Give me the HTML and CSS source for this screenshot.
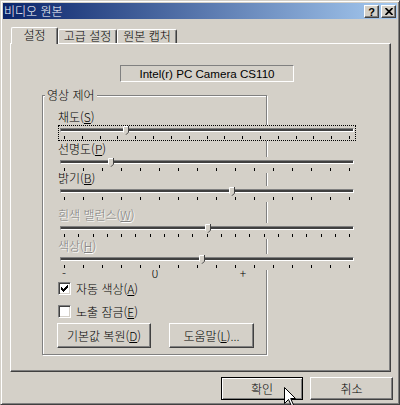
FILE: index.html
```html
<!DOCTYPE html>
<html lang="ko">
<head>
    <meta charset="UTF-8">
    <meta name="viewport" content="width=device-width, initial-scale=1.0">
    <title>비디오 원본</title>
    <link rel="stylesheet" href="styles.css">
</head>
<body>
<div class="window">
    <div class="titlebar">
        <span class="title">비디오 원본</span>
        <span class="caption-btn">?</span>
        <span class="caption-btn">
            <svg width="8" height="7" viewBox="0 0 8 7"><path d="M0.5 0 L7.5 7 M7.5 0 L0.5 7" stroke="#000" stroke-width="1.7"/></svg>
        </span>
    </div>

    <div class="dialog">
        <div class="tabs">
            <div class="tab active tab-1">설정</div>
            <div class="tab tab-2">고급 설정</div>
            <div class="tab tab-3">원본 캡처</div>
        </div>

        <div class="panel">
            <div class="device-name">Intel(r) PC Camera CS110</div>

            <div class="group">
                <div class="legend">영상 제어</div>

                <div class="control saturation">
                    <div class="label">채도(<u>S</u>)</div>
                    <div class="slider focused">
                        <div class="track"></div>
                        <div class="ticks" data-count="17"></div>
                        <span class="thumb" style="left: 64px"></span>
                    </div>
                </div>

                <div class="control">
                    <div class="label">선명도(<u>P</u>)</div>
                    <div class="slider">
                        <div class="track"></div>
                        <div class="ticks" data-count="16"></div>
                        <span class="thumb" style="left: 49px"></span>
                    </div>
                </div>

                <div class="control brightness">
                    <div class="label">밝기(<u>B</u>)</div>
                    <div class="slider">
                        <div class="track"></div>
                        <div class="ticks" data-count="16"></div>
                        <span class="thumb" style="left: 170px"></span>
                    </div>
                </div>

                <div class="control white-balance">
                    <div class="label disabled">흰색 밸런스(<u>W</u>)</div>
                    <div class="slider">
                        <div class="track"></div>
                        <div class="ticks" data-count="21"></div>
                        <span class="thumb" style="left: 146px"></span>
                    </div>
                </div>

                <div class="control hue">
                    <div class="label disabled">색상(<u>H</u>)</div>
                    <div class="slider">
                        <div class="track"></div>
                        <div class="ticks" data-count="16"></div>
                        <span class="thumb" style="left: 140px"></span>
                    </div>
                </div>

                <div class="scale">
                    <span>-</span>
                    <span class="zero">0</span>
                    <span class="plus">+</span>
                </div>

                <label class="check first">
                    <span class="box">
                        <svg width="7" height="7" viewBox="0 0 7 7" shape-rendering="crispEdges">
                            <rect x="0" y="2" width="1" height="3"/>
                            <rect x="1" y="3" width="1" height="3"/>
                            <rect x="2" y="4" width="1" height="3"/>
                            <rect x="3" y="3" width="1" height="3"/>
                            <rect x="4" y="2" width="1" height="3"/>
                            <rect x="5" y="1" width="1" height="3"/>
                            <rect x="6" y="0" width="1" height="3"/>
                        </svg>
                    </span>
                    자동 색상(<u>A</u>)
                </label>

                <label class="check">
                    <span class="box"></span>
                    노출 잠금(<u>E</u>)
                </label>

                <div class="group-buttons">
                    <button class="btn btn-reset">기본값 복원(<u>D</u>)</button>
                    <button class="btn btn-help">도움말(<u>L</u>)...</button>
                </div>
            </div>
        </div>

        <div class="footer">
            <button class="btn btn-ok default">확인</button>
            <button class="btn btn-cancel">취소</button>
        </div>
    </div>

    <!-- mouse pointer over the OK button -->
    <svg class="cursor" width="13" height="20" viewBox="0 0 13 20">
        <path d="M0.5 0.5 L0.5 16.5 L4.5 12.5 L7.5 19 L9.5 18 L6.7 11.5 L11.5 11.5 Z" fill="#fff" stroke="#000" stroke-width="1"/>
    </svg>
</div>

<script>
    // build the tick marks under each slider
    document.querySelectorAll(".ticks").forEach(function(row) {
        let count = parseInt(row.dataset.count);
        for (let i = 0; i < count; i++) {
            row.appendChild(document.createElement("span"));
        }
    });
</script>
</body>
</html>
```

FILE: styles.css
```css
* {
    box-sizing: border-box;
}
html, body {
    margin: 0;
    padding: 0;
    overflow: hidden;
}
body {
    font-family: "Noto Sans CJK KR", "Noto Sans", sans-serif;
    font-size: 12px;
    font-weight: 300;
    color: #000;
    background-color: #d4d0c8;
}
u {
    text-underline-offset: 1px;
}
/* Window frame */
.window {
    position: relative;
    width: 400px;
    height: 405px;
    padding: 2px;
    background-color: #d4d0c8;
    border: 1px solid;
    border-color: #d4d0c8 #404040 #404040 #d4d0c8;
    box-shadow: inset 1px 1px #fff, inset -1px -1px #808080;
}
.titlebar {
    display: flex;
    align-items: flex-start;
    height: 16px;
    padding-right: 1px;
    background: linear-gradient(to right, #0a246a, #a6caf0);
    color: #fff;
}
.title {
    flex: 1;
    padding-left: 1px;
    line-height: 16px;
}
.caption-btn {
    display: flex;
    align-items: center;
    justify-content: center;
    width: 15px;
    height: 13px;
    margin: 2px 0 0 2px;
    background-color: #d4d0c8;
    border: 1px solid;
    border-color: #fff #404040 #404040 #fff;
    box-shadow: inset -1px -1px #808080;
    color: #000;
    font: bold 11px "Liberation Sans", sans-serif;
}
/* Tabs */
.dialog {
    padding: 8px 6px 0 7px;
}
.tabs {
    display: flex;
    align-items: flex-end;
    height: 16px;
    padding-left: 1px;
}
.tab {
    height: 14px;
    line-height: 12px;
    text-align: center;
    background-color: #d4d0c8;
    border-top: 1px solid #fff;
    border-left: 1px solid #fff;
    border-right: 1px solid #404040;
    border-radius: 2px 2px 0 0;
    box-shadow: inset -1px 0 #808080;
}
.tab.active {
    position: relative;
    z-index: 1;
    height: 17px;
    line-height: 13px;
    margin-bottom: -1px;
}
.tab-1 { width: 47px; }
.tab-2 { width: 59px; }
.tab-3 { width: 60px; }
.panel {
    height: 329px;
    border: 1px solid;
    border-color: #fff #404040 #404040 #fff;
    box-shadow: inset -1px -1px #808080;
}
.device-name {
    width: 174px;
    height: 17px;
    margin: 21px 0 0 109px;
    border: 1px solid;
    border-color: #808080 #fff #fff #808080;
    font: 11.6px "Liberation Sans", sans-serif;
    line-height: 15px;
    text-align: center;
}
/* Group box */
.group {
    width: 225px;
    margin: 13px 0 0 31px;
    padding: 0 0 6px 15px;
    border: 1px solid #808080;
    box-shadow: inset 1px 1px #fff, 1px 1px #fff;
}
.legend {
    display: table;
    margin: -8px 0 0 -13px;
    padding: 0 2px;
    line-height: 14px;
    background-color: #d4d0c8;
}
.control.saturation {
    margin-top: 7px;
}
.control.brightness {
    margin-top: -3px;
}
.control.white-balance {
    margin-top: 5px;
}
.control.hue {
    margin-top: -1px;
}
.label {
    height: 16px;
    line-height: 16px;
    white-space: nowrap;
}
.label.disabled {
    color: #808080;
    text-shadow: 1px 1px 0 #fff;
}
/* Trackbars */
.slider {
    position: relative;
    width: 298px;
    height: 16px;
    background-color: #d4d0c8;
    border: 1px solid transparent;
}
.slider.focused {
    border: 1px dotted #000;
}
.track {
    width: 294px;
    height: 4px;
    margin: 2px 0 0 1px;
    background-color: #404040;
    border: 1px solid;
    border-color: #808080 #fff #fff #808080;
}
.ticks {
    display: flex;
    justify-content: space-between;
    width: 286px;
    height: 3px;
    margin: 4px 0 0 5px;
}
.ticks span {
    width: 1px;
    height: 3px;
    background-color: #000;
}
.thumb {
    position: absolute;
    top: 0;
    width: 6px;
    height: 9px;
    background: url("data:image/svg+xml,%3Csvg xmlns='http://www.w3.org/2000/svg' width='6' height='9'%3E%3Cpath d='M0 0H6V6L3 9L0 6Z' fill='%23d4d0c8'/%3E%3Cpath d='M0.5 6.5V0.5H5' fill='none' stroke='%23fff'/%3E%3Cpath d='M5.5 0V6.2L3 8.7' fill='none' stroke='%23404040'/%3E%3C/svg%3E");
}
.scale {
    display: flex;
    height: 10px;
    margin-top: -2px;
    line-height: 10px;
}
.scale span {
    width: 12px;
    text-align: center;
}
.scale .zero {
    margin-left: 79px;
}
.scale .plus {
    margin-left: 76px;
}
/* Check boxes */
.check {
    display: flex;
    align-items: center;
    height: 13px;
    margin-top: 10px;
    white-space: nowrap;
}
.check.first {
    margin-top: 4px;
}
.box {
    display: flex;
    align-items: center;
    justify-content: center;
    width: 13px;
    height: 13px;
    margin-right: 5px;
    background-color: #fff;
    border: 1px solid;
    border-color: #808080 #fff #fff #808080;
    box-shadow: inset 1px 1px #404040, inset -1px -1px #d4d0c8;
}
/* Buttons */
.group-buttons {
    display: flex;
    gap: 18px;
    margin-top: 5px;
    margin-left: -1px;
}
.btn {
    height: 25px;
    padding: 0;
    font-family: "Noto Sans CJK KR", "Noto Sans", sans-serif;
    font-size: 12px;
    font-weight: 300;
    color: #000;
    background-color: #d4d0c8;
    border: 1px solid;
    border-color: #fff #404040 #404040 #fff;
    box-shadow: inset -1px -1px #808080;
    white-space: nowrap;
}
.btn-reset { width: 94px; }
.btn-help { width: 85px; }
.footer {
    display: flex;
    justify-content: flex-end;
    gap: 7px;
    margin: 5px -2px 0 0;
}
.footer .btn {
    height: 23px;
}
.btn-ok { width: 82px; }
.btn-cancel { width: 83px; }
.btn.default {
    border-color: #000;
    box-shadow: inset 1px 1px #fff, inset -1px -1px #808080;
}
.cursor {
    position: absolute;
    left: 283px;
    top: 386px;
}
```
